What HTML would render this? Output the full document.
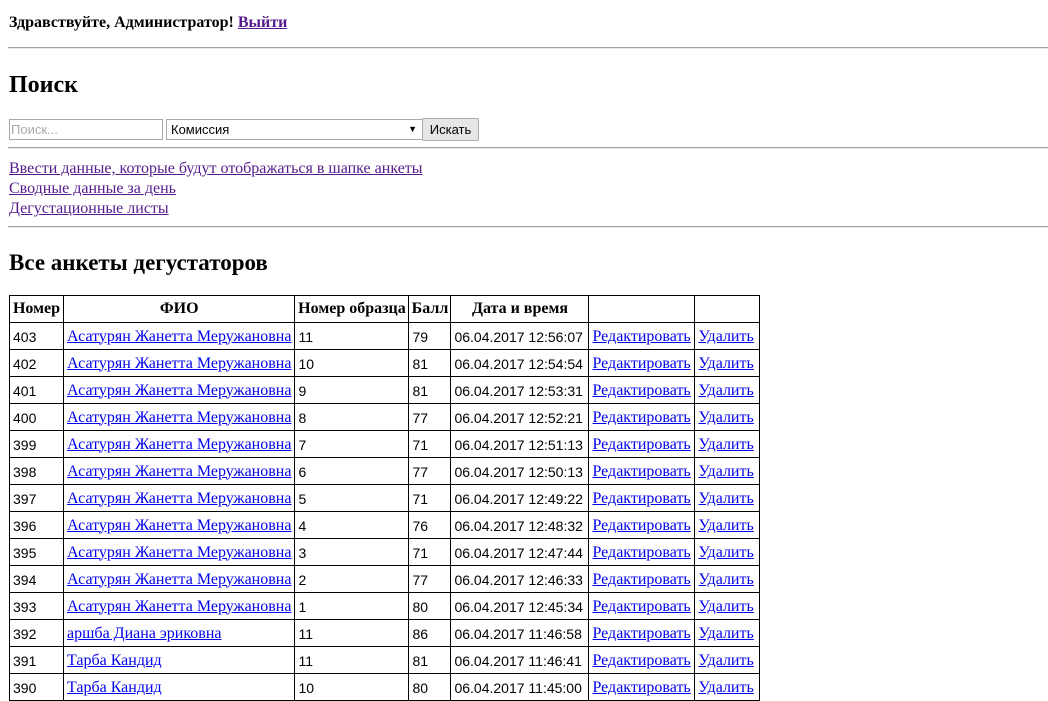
<!DOCTYPE html>
<html><head><meta charset="utf-8"><style>
body{margin:0;background:#fff;font-family:"Liberation Serif","DejaVu Serif",serif;color:#000;width:1048px;height:680px;overflow:hidden;position:relative}
.a{position:absolute;white-space:nowrap}
.hr{position:absolute;left:8px;right:0;height:0;border-top:1px solid #a0a0a0;border-bottom:1px solid #e8e8e8}
a{color:#0000ee}
a.v{color:#551a8b}
h2{margin:0;font-size:24px;font-weight:bold}
table{position:absolute;left:9px;top:295px;border-collapse:collapse;table-layout:fixed;font-size:16px}
td,th{border:1px solid #000;height:26px;padding:0 3px;white-space:nowrap;overflow:hidden}
td{height:25px;padding-top:1px}
th{font-size:16px;padding:0 2px}
td.n{font-family:"Liberation Sans",Arial,sans-serif;font-size:14px}
</style></head><body>
<div class="a" style="left:9px;top:14px;font-size:16px;font-weight:bold">Здравствуйте, Администратор! <a class="v" href="#">Выйти</a></div>
<div class="hr" style="top:47px"></div>
<h2 class="a" style="left:9px;top:72px">Поиск</h2>
<div class="a" style="left:9px;top:119px;width:151px;height:19px;border:1px solid #a9a9a9;font-family:'Liberation Sans',sans-serif;font-size:13px;color:#aaa;line-height:19px;padding-left:1px;box-sizing:content-box">Поиск...</div>
<div class="a" style="left:166px;top:119px;width:251px;height:19px;border:1px solid #a9a9a9;font-family:'Liberation Sans',sans-serif;font-size:13px;line-height:19px;padding-left:4px">Комиссия<span style="position:absolute;right:5px;font-size:9px">▼</span></div>
<div class="a" style="left:422px;top:118px;width:55px;height:21px;border:1px solid #adadad;background:#e6e6e6;border-radius:2px;font-family:'Liberation Sans',sans-serif;font-size:13px;line-height:21px;text-align:center">Искать</div>
<div class="hr" style="top:147px"></div>
<div class="a" style="left:9px;top:159px;font-size:16px;line-height:20px"><a class="v" href="#">Ввести данные, которые будут отображаться в шапке анкеты</a><br><a class="v" href="#">Сводные данные за день</a><br><a class="v" href="#">Дегустационные листы</a></div>
<div class="hr" style="top:226px"></div>
<h2 class="a" style="left:9px;top:250px;font-size:23px">Все анкеты дегустаторов</h2>
<table>
<colgroup><col style="width:54px"><col style="width:231px"><col style="width:114px"><col style="width:42px"><col style="width:138px"><col style="width:106px"><col style="width:65px"></colgroup>
<tr><th>Номер</th><th>ФИО</th><th>Номер образца</th><th>Балл</th><th>Дата и время</th><th></th><th></th></tr>
<tr><td class="n">403</td><td><a href="#">Асатурян Жанетта Меружановна</a></td><td class="n">11</td><td class="n">79</td><td class="n">06.04.2017 12:56:07</td><td><a href="#">Редактировать</a></td><td><a href="#">Удалить</a></td></tr>
<tr><td class="n">402</td><td><a href="#">Асатурян Жанетта Меружановна</a></td><td class="n">10</td><td class="n">81</td><td class="n">06.04.2017 12:54:54</td><td><a href="#">Редактировать</a></td><td><a href="#">Удалить</a></td></tr>
<tr><td class="n">401</td><td><a href="#">Асатурян Жанетта Меружановна</a></td><td class="n">9</td><td class="n">81</td><td class="n">06.04.2017 12:53:31</td><td><a href="#">Редактировать</a></td><td><a href="#">Удалить</a></td></tr>
<tr><td class="n">400</td><td><a href="#">Асатурян Жанетта Меружановна</a></td><td class="n">8</td><td class="n">77</td><td class="n">06.04.2017 12:52:21</td><td><a href="#">Редактировать</a></td><td><a href="#">Удалить</a></td></tr>
<tr><td class="n">399</td><td><a href="#">Асатурян Жанетта Меружановна</a></td><td class="n">7</td><td class="n">71</td><td class="n">06.04.2017 12:51:13</td><td><a href="#">Редактировать</a></td><td><a href="#">Удалить</a></td></tr>
<tr><td class="n">398</td><td><a href="#">Асатурян Жанетта Меружановна</a></td><td class="n">6</td><td class="n">77</td><td class="n">06.04.2017 12:50:13</td><td><a href="#">Редактировать</a></td><td><a href="#">Удалить</a></td></tr>
<tr><td class="n">397</td><td><a href="#">Асатурян Жанетта Меружановна</a></td><td class="n">5</td><td class="n">71</td><td class="n">06.04.2017 12:49:22</td><td><a href="#">Редактировать</a></td><td><a href="#">Удалить</a></td></tr>
<tr><td class="n">396</td><td><a href="#">Асатурян Жанетта Меружановна</a></td><td class="n">4</td><td class="n">76</td><td class="n">06.04.2017 12:48:32</td><td><a href="#">Редактировать</a></td><td><a href="#">Удалить</a></td></tr>
<tr><td class="n">395</td><td><a href="#">Асатурян Жанетта Меружановна</a></td><td class="n">3</td><td class="n">71</td><td class="n">06.04.2017 12:47:44</td><td><a href="#">Редактировать</a></td><td><a href="#">Удалить</a></td></tr>
<tr><td class="n">394</td><td><a href="#">Асатурян Жанетта Меружановна</a></td><td class="n">2</td><td class="n">77</td><td class="n">06.04.2017 12:46:33</td><td><a href="#">Редактировать</a></td><td><a href="#">Удалить</a></td></tr>
<tr><td class="n">393</td><td><a href="#">Асатурян Жанетта Меружановна</a></td><td class="n">1</td><td class="n">80</td><td class="n">06.04.2017 12:45:34</td><td><a href="#">Редактировать</a></td><td><a href="#">Удалить</a></td></tr>
<tr><td class="n">392</td><td><a href="#">аршба Диана эриковна</a></td><td class="n">11</td><td class="n">86</td><td class="n">06.04.2017 11:46:58</td><td><a href="#">Редактировать</a></td><td><a href="#">Удалить</a></td></tr>
<tr><td class="n">391</td><td><a href="#">Тарба Кандид</a></td><td class="n">11</td><td class="n">81</td><td class="n">06.04.2017 11:46:41</td><td><a href="#">Редактировать</a></td><td><a href="#">Удалить</a></td></tr>
<tr><td class="n">390</td><td><a href="#">Тарба Кандид</a></td><td class="n">10</td><td class="n">80</td><td class="n">06.04.2017 11:45:00</td><td><a href="#">Редактировать</a></td><td><a href="#">Удалить</a></td></tr>
</table>
</body></html>
